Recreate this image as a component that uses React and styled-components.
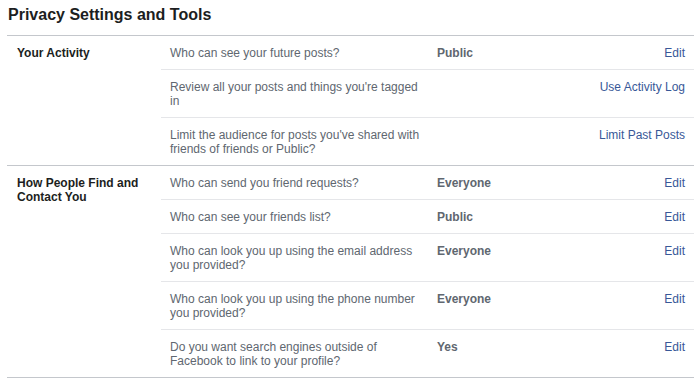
import React from 'react';
import styled, { createGlobalStyle } from 'styled-components';

const sections = [
  {
    title: 'Your Activity',
    rows: [
      { q: 'Who can see your future posts?', value: 'Public', action: 'Edit' },
      { q: "Review all your posts and things you're tagged in", value: '', action: 'Use Activity Log' },
      { q: "Limit the audience for posts you've shared with friends of friends or Public?", value: '', action: 'Limit Past Posts' }
    ]
  },
  {
    title: 'How People Find and Contact You',
    rows: [
      { q: 'Who can send you friend requests?', value: 'Everyone', action: 'Edit' },
      { q: 'Who can see your friends list?', value: 'Public', action: 'Edit' },
      { q: 'Who can look you up using the email address you provided?', value: 'Everyone', action: 'Edit' },
      { q: 'Who can look you up using the phone number you provided?', value: 'Everyone', action: 'Edit' },
      { q: 'Do you want search engines outside of Facebook to link to your profile?', value: 'Yes', action: 'Edit' }
    ]
  }
];

function App() {
  return (
    <>
      <GlobalStyle />
      <Page>
        <Title>Privacy Settings and Tools</Title>
        <Table>
          {sections.map((s) => (
            <Section key={s.title}>
              <SectionLabel>{s.title}</SectionLabel>
              <Rows>
                {s.rows.map((r) => (
                  <Row key={r.q}>
                    <Question>{r.q}</Question>
                    <Value>{r.value}</Value>
                    <Action href="#">{r.action}</Action>
                  </Row>
                ))}
              </Rows>
            </Section>
          ))}
        </Table>
      </Page>
    </>
  );
}

export default App;

const GlobalStyle = createGlobalStyle`
  body {
    margin: 0;
    background: #fff;
    font-family: "Liberation Sans", Arial, sans-serif;
    -webkit-font-smoothing: antialiased;
  }
`

const Page = styled.div`
  width: 687px;
  padding: 0 6px 0 7px;
`

const Title = styled.h2`
  margin: 0;
  height: 35px;
  box-sizing: border-box;
  padding: 5px 0 0 1px;
  font-size: 16px;
  line-height: 20px;
  font-weight: bold;
  color: #1c1e21;
`

const Table = styled.div`
  border-top: 1px solid #c4c7cc;
`

const Section = styled.div`
  display: grid;
  grid-template-columns: 154px 1fr;
  border-bottom: 1px solid #c4c7cc;
`

const SectionLabel = styled.div`
  padding: 10px 10px 0 10px;
  font-size: 12px;
  line-height: 14px;
  font-weight: bold;
  color: #1c1e21;
  width: 130px;
`

const Rows = styled.div`
  display: flex;
  flex-direction: column;
`

const Row = styled.div`
  display: flex;
  align-items: flex-start;
  padding: 10px 9px 9px 9px;
  font-size: 12px;
  line-height: 14px;
  border-bottom: 1px solid #e5e6e9;

  &:last-child {
    border-bottom: none;
  }
`

const Question = styled.div`
  flex: 0 0 267px;
  box-sizing: border-box;
  padding-right: 15px;
  color: #606770;
`

const Value = styled.div`
  flex: 1;
  font-weight: bold;
  color: #606770;
`

const Action = styled.a`
  color: #385898;
  text-decoration: none;
  white-space: nowrap;
`
